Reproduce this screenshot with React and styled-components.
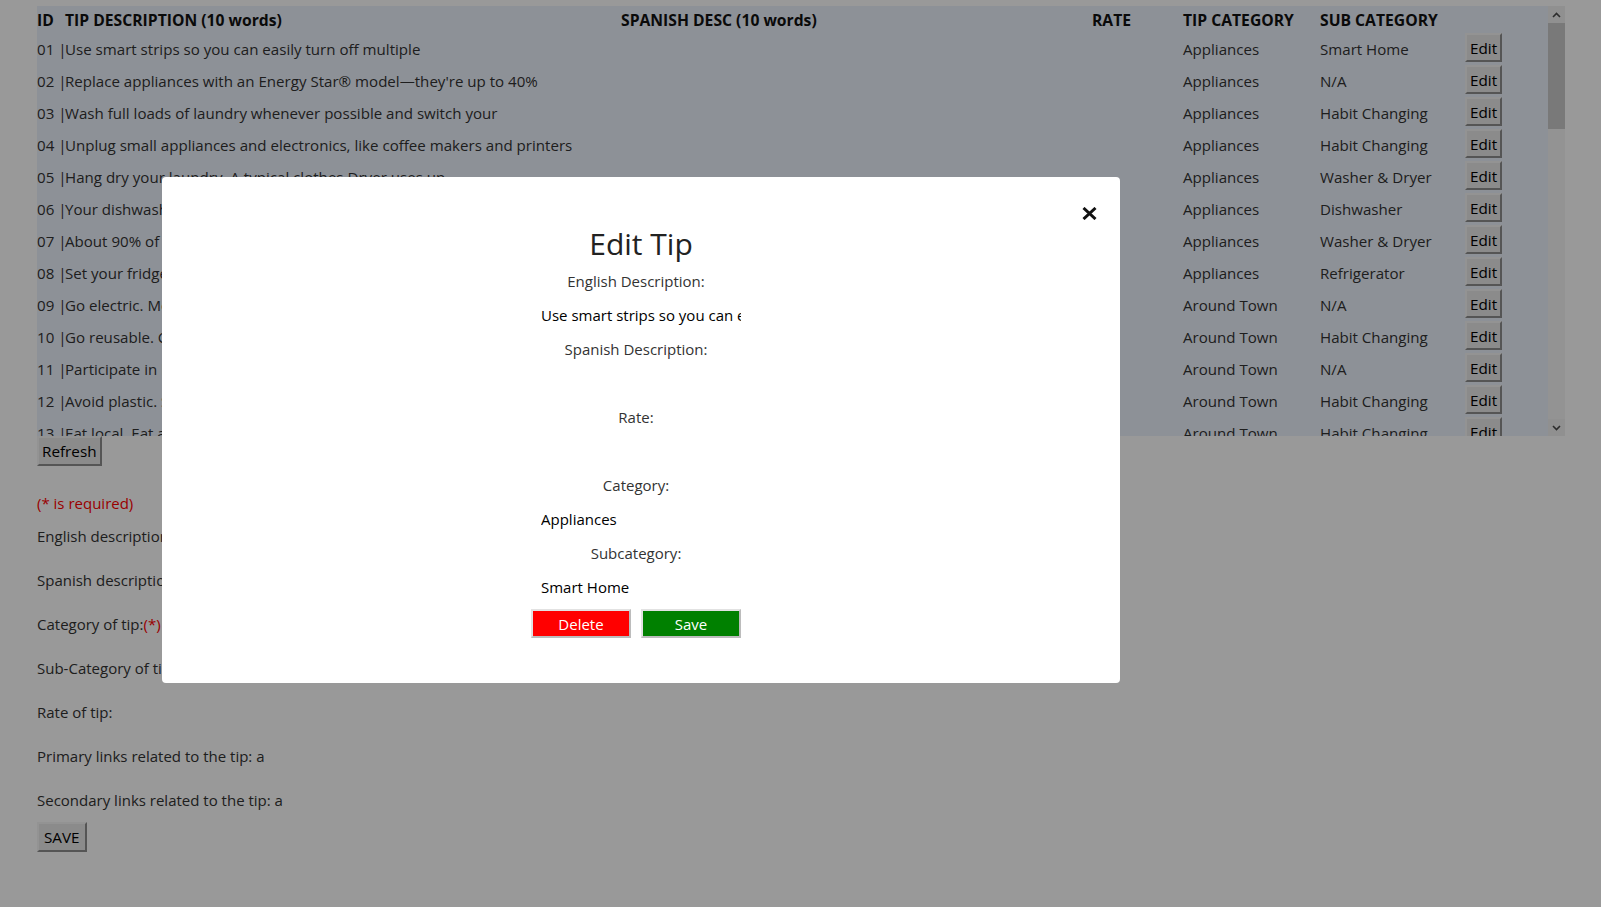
import React from 'react';
import styled, { createGlobalStyle } from 'styled-components';

const GlobalStyle = createGlobalStyle`
  html, body { margin: 0; padding: 0; background: #ffffff; height: 100%; overflow: hidden; }
  body {
    font-family: "Open Sans", "Liberation Sans", sans-serif;
    font-size: 15px;
    color: #333333;
  }
`;

const Page = styled.div`
  padding: 6px 36px 0 37px;
`;

const TableWrap = styled.div`
  display: flex;
  height: 430px;
`;

const TableScroll = styled.div`
  flex: 1;
  overflow-y: auto;
  background: #ecf2fc;
  scrollbar-width: none;
  &::-webkit-scrollbar { display: none; }
`;

const ScrollRail = styled.div`
  width: 17px;
  display: flex;
  flex-direction: column;
  background: #fbfbfb;
`;

const RailArrow = styled.div`
  height: 17px;
  display: flex;
  align-items: center;
  justify-content: center;
  background: #f1f1f1;
`;

const RailTrack = styled.div`
  flex: 1;
  background: #f5f5f5;
`;

const RailThumb = styled.div`
  height: 106px;
  background: #cacaca;
`;

const Row = styled.div`
  display: grid;
  grid-template-columns: 28px 556px 471px 91px 137px 145px 1fr;
  height: ${(p) => (p.$head ? 27 : 32)}px;
  align-items: center;
  font-size: ${(p) => (p.$head ? 15.7 : 15.1)}px;
  font-weight: ${(p) => (p.$head ? 700 : 400)};
  color: ${(p) => (p.$head ? '#111' : '#333')};
  white-space: nowrap;
`;

const Cell = styled.div`
  min-width: 0;
`;

const GrayButton = styled.button`
  font-family: inherit;
  font-size: 15.25px;
  color: #000;
  height: ${(p) => p.$h || 29}px;
  padding: 0 ${(p) => p.$px || 3}px;
  line-height: 20px;
  background: #e8e8e8;
  border: 2px solid;
  border-color: #f6f6f6 #8e8e8e #8e8e8e #f6f6f6;
  cursor: pointer;
`;

const EditButton = styled(GrayButton)`
  align-self: start;
  justify-self: start;
`;

const BlockButton = styled(GrayButton)`
  display: block;
`;

const Required = styled.div`
  margin-top: 26px;
  line-height: 22px;
  color: #ff0000;
`;

const FieldLine = styled.div`
  height: 44px;
  display: flex;
  align-items: center;
  white-space: nowrap;
`;

const Red = styled.span`
  color: #ff0000;
`;

const Backdrop = styled.div`
  position: fixed;
  inset: 0;
  background: rgba(0, 0, 0, 0.4);
`;

const Modal = styled.div`
  position: fixed;
  left: 162px;
  top: 177px;
  width: 958px;
  height: 506px;
  box-sizing: border-box;
  background: #ffffff;
  border-radius: 4px;
  padding-top: 46px;
  display: flex;
  flex-direction: column;
  align-items: center;
`;

const CloseButton = styled.button`
  position: absolute;
  top: 29px;
  right: 22px;
  width: 17px;
  height: 15px;
  padding: 0;
  border: none;
  background: transparent;
  display: flex;
  align-items: center;
  justify-content: center;
  cursor: pointer;
`;

const Title = styled.h2`
  margin: 0;
  font-size: 30px;
  line-height: 41px;
  font-weight: 400;
  color: #222;
`;

const Form = styled.div`
  width: 220px;
  display: flex;
  flex-direction: column;
`;

const Label = styled.div`
  width: 210px;
  height: 34px;
  display: flex;
  align-items: center;
  justify-content: center;
  color: #333;
`;

const Value = styled.input`
  margin-left: 10px;
  width: 200px;
  height: 34px;
  box-sizing: border-box;
  padding: 0;
  border: none;
  outline: none;
  background: transparent;
  font-family: inherit;
  font-size: 15px;
  color: #000;
`;

const Actions = styled.div`
  margin-top: 5px;
  display: flex;
  gap: 10px;
`;

const ColorButton = styled.button`
  width: 100px;
  height: 29px;
  box-sizing: border-box;
  font-family: inherit;
  font-size: 15px;
  color: #fff;
  background: ${(p) => p.$bg};
  border: 2px solid;
  border-color: #e2e2e2 #bcbcbc #bcbcbc #e2e2e2;
  padding: 0;
  cursor: pointer;
`;

const baseRows = [
  ['Use smart strips so you can easily turn off multiple', 'Appliances', 'Smart Home'],
  ['Replace appliances with an Energy Star® model—they\'re up to 40%', 'Appliances', 'N/A'],
  ['Wash full loads of laundry whenever possible and switch your', 'Appliances', 'Habit Changing'],
  ['Unplug small appliances and electronics, like coffee makers and printers', 'Appliances', 'Habit Changing'],
  ['Hang dry your laundry. A typical clothes Dryer uses up', 'Appliances', 'Washer & Dryer'],
  ['Your dishwasher uses less water than washing dishes by hand', 'Appliances', 'Dishwasher'],
  ['About 90% of the energy used by washing machines goes to', 'Appliances', 'Washer & Dryer'],
  ['Set your fridge to 37 degrees and your freezer to 0', 'Appliances', 'Refrigerator'],
  ['Go electric. Most transportation emissions come from cars and trucks', 'Around Town', 'N/A'],
  ['Go reusable. Carry a reusable water bottle, coffee mug and bag', 'Around Town', 'Habit Changing'],
  ['Participate in local clean-up events around your neighborhood', 'Around Town', 'N/A'],
  ['Avoid plastic. Say no to straws, utensils and single-use bags', 'Around Town', 'Habit Changing'],
  ['Eat local. Eat at restaurants that source their food nearby', 'Around Town', 'Habit Changing'],
];

const extraTips = [
  ['Walk or bike for short trips instead of driving', 'Transportation', 'Habit Changing'],
  ['Turn off lights when you leave a room', 'Home', 'Lighting'],
  ['Switch to LED bulbs, they use up to 75% less energy', 'Home', 'Lighting'],
  ['Take shorter showers to save water and energy', 'Water', 'Habit Changing'],
  ['Fix leaky faucets as soon as you notice them', 'Water', 'N/A'],
  ['Compost food scraps instead of sending them to landfill', 'Food', 'Waste'],
];

const rows = [];
for (let i = 0; i < 49; i++) {
  const src = i < baseRows.length ? baseRows[i] : extraTips[(i - baseRows.length) % extraTips.length];
  rows.push({ id: String(i + 1).padStart(2, '0'), desc: src[0], cat: src[1], sub: src[2] });
}

const CloseIcon = () => (
  <svg width="15" height="13" viewBox="0 0 15 13">
    <path d="M1.5 1 L13.5 12 M13.5 1 L1.5 12" stroke="#111" strokeWidth="3" fill="none" />
  </svg>
);

const Chevron = ({ up }) => (
  <svg width="9" height="6" viewBox="0 0 9 6">
    <path d={up ? 'M1 5 L4.5 1.5 L8 5' : 'M1 1 L4.5 4.5 L8 1'} stroke="#4a4a4a" strokeWidth="1.6" fill="none" />
  </svg>
);

export default function App() {
  return (
    <>
      <GlobalStyle />
      <Page>
        <TableWrap>
          <TableScroll>
            <Row $head>
              <Cell>ID</Cell>
              <Cell>TIP DESCRIPTION (10 words)</Cell>
              <Cell>SPANISH DESC (10 words)</Cell>
              <Cell>RATE</Cell>
              <Cell>TIP CATEGORY</Cell>
              <Cell>SUB CATEGORY</Cell>
              <Cell />
            </Row>
            {rows.map((r) => (
              <Row key={r.id}>
                <Cell>{r.id} |</Cell>
                <Cell>{r.desc}</Cell>
                <Cell />
                <Cell />
                <Cell>{r.cat}</Cell>
                <Cell>{r.sub}</Cell>
                <EditButton>Edit</EditButton>
              </Row>
            ))}
          </TableScroll>
          <ScrollRail>
            <RailArrow><Chevron up /></RailArrow>
            <RailTrack><RailThumb /></RailTrack>
            <RailArrow><Chevron /></RailArrow>
          </ScrollRail>
        </TableWrap>
        <BlockButton $h={30} $px={3}>Refresh</BlockButton>
        <Required>(* is required)</Required>
        <FieldLine>English description of tip:<Red>(*)</Red></FieldLine>
        <FieldLine>Spanish description of tip:</FieldLine>
        <FieldLine>Category of tip:<Red>(*)</Red></FieldLine>
        <FieldLine>Sub-Category of tip:<Red>(*)</Red></FieldLine>
        <FieldLine>Rate of tip:</FieldLine>
        <FieldLine>Primary links related to the tip: a</FieldLine>
        <FieldLine>Secondary links related to the tip: a</FieldLine>
        <BlockButton $h={30} $px={5}>SAVE</BlockButton>
      </Page>
      <Backdrop />
      <Modal>
        <CloseButton aria-label="Close"><CloseIcon /></CloseButton>
        <Title>Edit Tip</Title>
        <Form>
          <Label>English Description:</Label>
          <Value readOnly value="Use smart strips so you can easily turn off multiple" />
          <Label>Spanish Description:</Label>
          <Value readOnly value="" />
          <Label>Rate:</Label>
          <Value readOnly value="" />
          <Label>Category:</Label>
          <Value readOnly value="Appliances" />
          <Label>Subcategory:</Label>
          <Value readOnly value="Smart Home" />
          <Actions>
            <ColorButton $bg="#ff0000">Delete</ColorButton>
            <ColorButton $bg="#008000">Save</ColorButton>
          </Actions>
        </Form>
      </Modal>
    </>
  );
}
